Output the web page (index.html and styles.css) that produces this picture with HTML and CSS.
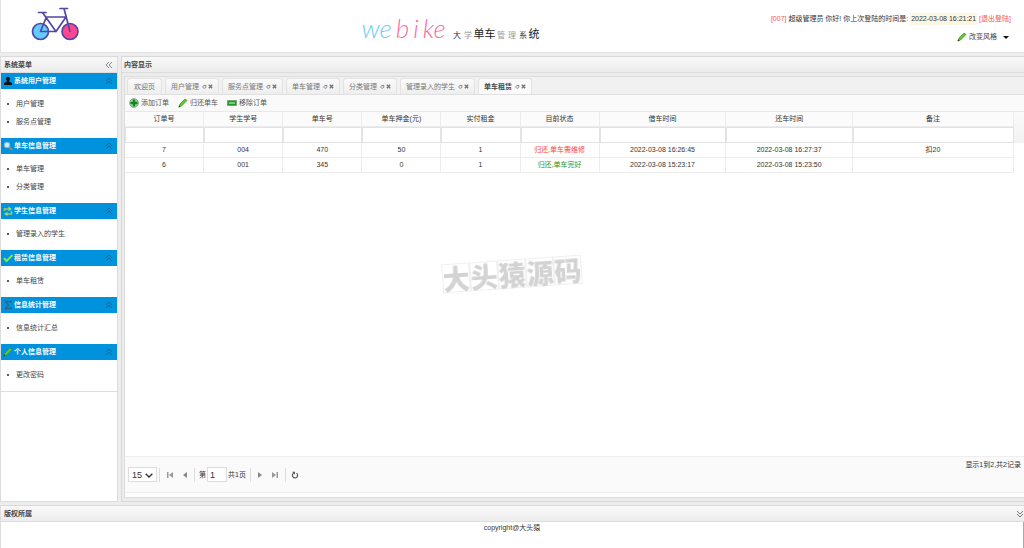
FILE: index.html
```html
<!DOCTYPE html>
<html lang="zh-CN">
<head>
<meta charset="utf-8">
<title>webike 单车管理系统</title>
<link rel="stylesheet" href="styles.css">
</head>
<body>
<svg class="defs" aria-hidden="true">
  <symbol id="up" viewBox="0 0 8 8"><path d="M1 4l3-3 3 3M1 7l3-3 3 3" fill="none" stroke="currentColor"/></symbol>
  <symbol id="pencil" viewBox="0 0 10 10"><path d="M1 9l1-3 5-5 2 1.500-5.500 5.500z" fill="#5fc92e" stroke="#48942f" stroke-width=".8"/><path d="M.5 9.500l.8-2 1.200 1z" fill="#333"/></symbol>
  <symbol id="reload" viewBox="0 0 6 6"><path d="M4.500 1.800H2L1.200 3v1.200l.8.800h1.500l1-1V1" fill="none" stroke="#777"/></symbol>
  <symbol id="close" viewBox="0 0 6 6"><path d="M1 1l4 4M5 1L1 5" stroke="#6f7480" stroke-width="1.600"/></symbol>
</svg>
<header class="top">
  <svg class="bike" viewBox="0 0 48 34" role="img" aria-label="webike">
    <g stroke="#5147a5" stroke-width="1.700" stroke-linecap="round" stroke-linejoin="round">
      <circle cx="9.500" cy="24.500" r="8" fill="#63cbff"/>
      <circle cx="39" cy="24.500" r="8" fill="#ff4590"/>
      <path d="M7.500 5.500H15M11.500 5.500L25 24.500H9.500L15 11M14.500 10H35L25 24.500M29 1.500H36.500M33 1.500L39 24.500" fill="none"/>
    </g>
  </svg>
  <h1 class="brand">
    <span class="word"><span class="blue">we</span><span class="pink">b</span><span class="pink">i</span><span class="pink">ke</span></span>
    <span class="sub"><span class="ink">大</span><span class="faint">学</span>单车<span class="faint">管</span><span class="faint">理</span><span class="ink">系</span>统</span>
  </h1>
  <div class="user">
    <p class="greet"><span class="red">[007]</span> 超级管理员 你好! 你上次登陆的时间是: <span class="stamp">2022-03-08 16:21:21</span> <a class="red" href="#">[退出登陆]</a></p>
    <button class="theme" type="button"><svg class="ico"><use href="#pencil"/></svg>改变风格<span class="caret"></span></button>
  </div>
</header>
<div class="middle">
  <nav class="side">
    <h2 class="bar">系统菜单<svg class="mini" viewBox="0 0 8 8"><path d="M4 1L1 4l3 3M7 1L4 4l3 3" fill="none" stroke="#888"/></svg></h2>
    <h3 class="group"><svg class="ico" viewBox="0 0 10 10"><path d="M3 3a2 2.300 0 1 1 4 0L6 5.500 9 7v2H1V7l3-1.500z" fill="#111"/></svg>系统用户管理<svg class="mini"><use href="#up"/></svg></h3>
    <ul class="items"><li><a href="#">用户管理</a></li><li><a href="#">服务点管理</a></li></ul>
    <h3 class="group"><svg class="ico" viewBox="0 0 10 10"><path d="M6 6l3 3" stroke="#c9822d" stroke-width="2"/><circle cx="4" cy="4" r="2.800" fill="#cfe9fa" stroke="#8db4d0"/></svg>单车信息管理<svg class="mini"><use href="#up"/></svg></h3>
    <ul class="items"><li><a href="#">单车管理</a></li><li><a href="#">分类管理</a></li></ul>
    <h3 class="group"><svg class="ico" viewBox="0 0 10 10"><path d="M1.500 5V3H6M8.500 5v3H4" fill="none" stroke="#8ccf62" stroke-width="1.600"/><path d="M5.500 .5L9 3 5.500 5.300zM4.500 5.700L1 8l3.500 2z" fill="#a5d977"/></svg>学生信息管理<svg class="mini"><use href="#up"/></svg></h3>
    <ul class="items"><li><a href="#">管理录入的学生</a></li></ul>
    <h3 class="group"><svg class="ico" viewBox="0 0 10 10"><path d="M1 5l2.500 3L9.500 2" fill="none" stroke="#8be34b" stroke-width="2"/></svg>租赁信息管理<svg class="mini"><use href="#up"/></svg></h3>
    <ul class="items"><li><a href="#">单车租赁</a></li></ul>
    <h3 class="group"><svg class="ico" viewBox="0 0 10 10"><path d="M8 3V1.500H2.500L5.500 5l-3 3.500H8V7" fill="none" stroke="#35617f" stroke-width="1.300"/></svg>信息统计管理<svg class="mini"><use href="#up"/></svg></h3>
    <ul class="items"><li><a href="#">信息统计汇总</a></li></ul>
    <h3 class="group"><svg class="ico"><use href="#pencil"/></svg>个人信息管理<svg class="mini"><use href="#up"/></svg></h3>
    <ul class="items last"><li><a href="#">更改密码</a></li></ul>
  </nav>
  <main class="center">
    <h2 class="bar">内容显示</h2>
    <div class="work">
      <div class="tabs">
        <a class="tab" href="#">欢迎页</a>
        <a class="tab" href="#">用户管理<svg class="tiny first"><use href="#reload"/></svg><svg class="tiny"><use href="#close"/></svg></a>
        <a class="tab" href="#">服务点管理<svg class="tiny first"><use href="#reload"/></svg><svg class="tiny"><use href="#close"/></svg></a>
        <a class="tab" href="#">单车管理<svg class="tiny first"><use href="#reload"/></svg><svg class="tiny"><use href="#close"/></svg></a>
        <a class="tab" href="#">分类管理<svg class="tiny first"><use href="#reload"/></svg><svg class="tiny"><use href="#close"/></svg></a>
        <a class="tab" href="#">管理录入的学生<svg class="tiny first"><use href="#reload"/></svg><svg class="tiny"><use href="#close"/></svg></a>
        <a class="tab active" href="#">单车租赁<svg class="tiny first"><use href="#reload"/></svg><svg class="tiny"><use href="#close"/></svg></a>
      </div>
      <div class="tools">
        <button type="button"><svg class="ico" viewBox="0 0 10 10"><circle cx="5" cy="5" r="4.300" fill="#a9d3ab" stroke="#6fae73"/><path d="M5 1.500v7M1.500 5h7" stroke="#12861f" stroke-width="2.400"/></svg>添加订单</button>
        <button type="button"><svg class="ico"><use href="#pencil"/></svg>归还单车</button>
        <button type="button"><svg class="ico" viewBox="0 0 10 10"><path d="M.5 2.500h9v5h-9z" fill="#279431" stroke="#65ad6a"/><path d="M2 5h6" stroke="#b9e8b9" stroke-width="1.200"/></svg>移除订单</button>
      </div>
      <div class="grid">
        <table>
          <colgroup><col class="narrow"><col class="narrow"><col class="narrow"><col class="narrow"><col class="narrow"><col class="narrow"><col class="date"><col class="date"><col class="note"></colgroup>
          <thead>
            <tr><th>订单号</th><th>学生学号</th><th>单车号</th><th>单车押金(元)</th><th>实付租金</th><th>目前状态</th><th>借车时间</th><th>还车时间</th><th>备注</th></tr>
            <tr class="filter"><td><input aria-label="订单号"></td><td><input aria-label="学生学号"></td><td><input aria-label="单车号"></td><td><input aria-label="单车押金"></td><td><input aria-label="实付租金"></td><td><input aria-label="目前状态"></td><td><input aria-label="借车时间"></td><td><input aria-label="还车时间"></td><td><input aria-label="备注"></td></tr>
          </thead>
          <tbody>
            <tr><td>7</td><td>004</td><td>470</td><td>50</td><td>1</td><td class="bad">归还,单车需维修</td><td>2022-03-08 16:26:45</td><td>2022-03-08 16:27:37</td><td>扣20</td></tr>
            <tr><td>6</td><td>001</td><td>345</td><td>0</td><td>1</td><td class="good">归还,单车完好</td><td>2022-03-08 15:23:17</td><td>2022-03-08 15:23:50</td><td></td></tr>
          </tbody>
        </table>
      </div>
      <div class="pager">
        <div class="controls">
          <span class="pick"><select aria-label="每页条数"><option>15</option></select><svg class="tiny" viewBox="0 0 6 6"><path d="M.5 2L3 4.500 5.500 2" fill="none" stroke="#333"/></svg></span>
          <span class="sep"></span>
          <button type="button" aria-label="首页"><svg viewBox="0 0 8 8"><path d="M1 1h1.500v6H1zM7 1v6L3 4z" fill="#999"/></svg></button>
          <button type="button" aria-label="上一页"><svg viewBox="0 0 8 8"><path d="M6 1v6L2 4z" fill="#888"/></svg></button>
          <span class="sep"></span>
          <label class="page">第<input value="1">共1页</label>
          <span class="sep"></span>
          <button type="button" aria-label="下一页"><svg viewBox="0 0 8 8"><path d="M2 1v6l4-3z" fill="#888"/></svg></button>
          <button type="button" aria-label="末页"><svg viewBox="0 0 8 8"><path d="M5.500 1H7v6H5.500zM1 1v6l4-3z" fill="#999"/></svg></button>
          <span class="sep"></span>
          <button type="button" aria-label="刷新"><svg viewBox="0 0 8 8"><path d="M5.500 2.200a2.600 2.600 0 1 1-3 0" fill="none" stroke="#555" stroke-width="1.200"/><path d="M1 .8h3v3z" fill="#555"/></svg></button>
        </div>
        <p class="info">显示1到2,共2记录</p>
      </div>
    </div>
  </main>
</div>
<footer class="foot">
  <h2 class="bar">版权所属<svg class="mini" viewBox="0 0 8 8"><path d="M1 1l3 3 3-3M1 4l3 3 3-3" fill="none" stroke="#777"/></svg></h2>
  <p class="copy">copyright@大头猿</p>
</footer>
<div class="mark"><span>大</span><span>头</span><span>猿</span><span>源</span><span>码</span></div>
</body>
</html>
```
FILE: styles.css
```css
* { box-sizing: border-box; }
body {
  margin: 0;
  min-height: 100vh;
  display: flex;
  flex-direction: column;
  background: #ededed;
  color: #333;
  font: 7px/14px "Liberation Sans", "Noto Sans CJK SC", sans-serif;
}
h1, h2, h3, p, ul { margin: 0; padding: 0; font-size: inherit; }
a { color: inherit; text-decoration: none; }
button, input, select { font: inherit; color: inherit; margin: 0; padding: 0; border: 0; background: none; }
svg { flex: none; }
.defs { position: absolute; width: 0; height: 0; }
.ico { width: 10px; height: 10px; }
.mini { width: 8px; height: 8px; margin-left: auto; }
.tiny { width: 5px; height: 5px; }

.top {
  display: grid;
  grid-template-columns: 1fr auto 1fr;
  height: 53px;
  background: #fff;
  border: 1px solid #e2e2e2;
  border-width: 0 0 1px 1px;
}
.bike { width: 48px; height: 34px; margin: 7px 0 0 30px; }
.brand { display: flex; align-items: baseline; gap: 6px; margin-right: 124px; padding-top: 12px; font-weight: 400; }
.word { display: flex; gap: 4px; font: italic 300 26px/32px Lato, sans-serif; }
.blue { color: #6ccdf8; }
.pink { color: #ff6c9d; }
.sub { color: #222; font-size: 11px; line-height: 16px; white-space: nowrap; }
.faint, .ink { display: inline-block; width: 11px; text-align: center; font-size: 8px; }
.faint { color: #999; }
.ink { color: #333; }
.user { display: flex; flex-direction: column; align-items: flex-end; gap: 4px; padding: 12px 13px 0 0; }
.greet { white-space: nowrap; }
.red { color: #f8564a; }
.stamp { display: inline-block; line-height: 12px; background: #fdf6e3; padding: 0 1px; }
.theme { display: flex; align-items: center; gap: 2px; padding-right: 2px; color: #444; }
.caret { margin-left: 4px; border: 3px solid transparent; border-top-color: #111; border-bottom: 0; }

.middle { flex: 1; display: flex; gap: 3px; padding: 3px 0; }
.bar {
  display: flex;
  align-items: center;
  height: 17px;
  padding: 0 4px 0 3px;
  border-top: 1px solid #d9d9d9;
  border-bottom: 1px solid #ddd;
  background: linear-gradient(#f9f9f9, #ececec);
  color: #444;
  font-weight: 700;
}
.side { width: 118px; flex: none; background: #fff; border: 1px solid #dcdcdc; border-top: 0; }
.group { display: flex; align-items: center; height: 16px; gap: 1px; padding: 0 4px 0 2px; background: #0092dc; color: #fff; }
.group .mini { color: #126998; }
.items { list-style: none; padding: 6px 0 7px 6px; }
.items li { display: flex; align-items: center; gap: 7px; line-height: 18px; color: #444; }
.items li::before { content: ""; width: 2px; height: 2px; border-radius: 1px; background: #222; }
.last { border-bottom: 1px solid #ddd; }

.center { flex: 1; min-width: 0; display: flex; flex-direction: column; border: 1px solid #d9d9d9; border-width: 0 0 1px 1px; padding-bottom: 3px; background: #ececec; }
.center > .bar { padding-left: 2px; }
.work { flex: 1; display: flex; flex-direction: column; margin: 3px 0 0 2px; padding-bottom: 4px; border: 1px solid #ddd; border-right: 0; background: #fff; }
.tabs { display: flex; gap: 3px; padding: 1px 2px 0; background: #f1f1f1; border-bottom: 1px solid #e0e0e0; }
.tab { display: flex; align-items: center; height: 16px; padding: 0 5px; color: #777; background: linear-gradient(#fafafa, #eee); border: 1px solid #e2e2e2; border-bottom: 0; border-radius: 3px 3px 0 0; white-space: nowrap; }
.tab:first-child { padding: 0 6px; }
.tiny.first { margin: 0 1px 0 3px; }
.active { margin-bottom: -1px; background: #fafafa; color: #444; font-weight: 700; }
.tools { display: flex; gap: 9px; padding: 0 4px; height: 16px; background: #fafafa; }
.tools button { display: flex; align-items: center; gap: 2px; color: #555; }
.grid { flex: 1; padding-right: 10px; background: linear-gradient(#fafafa, #f2f2f2) 0 0 / 100% 31px no-repeat; border-top: 1px solid #e8e8e8; }
table { width: 100%; table-layout: fixed; border-collapse: separate; border-spacing: 0; background: #fff; text-align: center; }
thead { background: #fbfbfb; }
.narrow { width: 8.9%; }
.date { width: 14.25%; }
.note { width: 18.1%; }
th, td { height: 15px; padding: 0; line-height: 14px; font-weight: 400; border: 1px solid #ececec; border-width: 0 1px 1px 0; }
.filter td { border: 0; }
.filter input { display: block; width: 100%; height: 16px; border: 1px solid #e3e3e3; background: #fff; }
.bad { color: #f44; }
.good { color: #299229; }

.pager { display: flex; justify-content: space-between; height: 37px; padding: 0 3px; border: 1px solid #eee; border-width: 1px 0; background: #fafafa; }
.controls { display: flex; align-items: center; }
.controls button { display: flex; width: 15px; justify-content: center; }
.controls svg { width: 8px; height: 8px; }
.pick { display: flex; align-items: center; width: 29px; height: 15px; padding: 0 3px; border: 1px solid #ddd; background: #fff; font-size: 9px; }
.pick select { appearance: none; flex: 1; min-width: 0; }
.sep { width: 1px; height: 14px; margin: 0 2px; background: #ddd; }
.page { display: flex; align-items: center; gap: 1px; padding: 0 2px; }
.page input { width: 20px; height: 15px; padding: 0 2px; border: 1px solid #ddd; background: #fff; font-size: 9px; }
.info { padding-top: 1px; }

.foot { height: 43px; background: #fff; border-left: 1px solid #ddd; display: flex; flex-direction: column; }
.foot .bar { padding-right: 0; }
.copy { flex: 1; text-align: center; line-height: 12px; border-right: 1px solid #aaa; }
.mark { position: fixed; left: 50%; top: 50%; display: flex; transform: translate(-50%, -50%) rotate(-4deg); color: #d3d3d3; font: 900 27px/27px "Noto Sans CJK SC", sans-serif; pointer-events: none; }
.mark span { border: 1px solid #f0f0f0; width: 28px; height: 29px; display: flex; align-items: center; justify-content: center; }
```
